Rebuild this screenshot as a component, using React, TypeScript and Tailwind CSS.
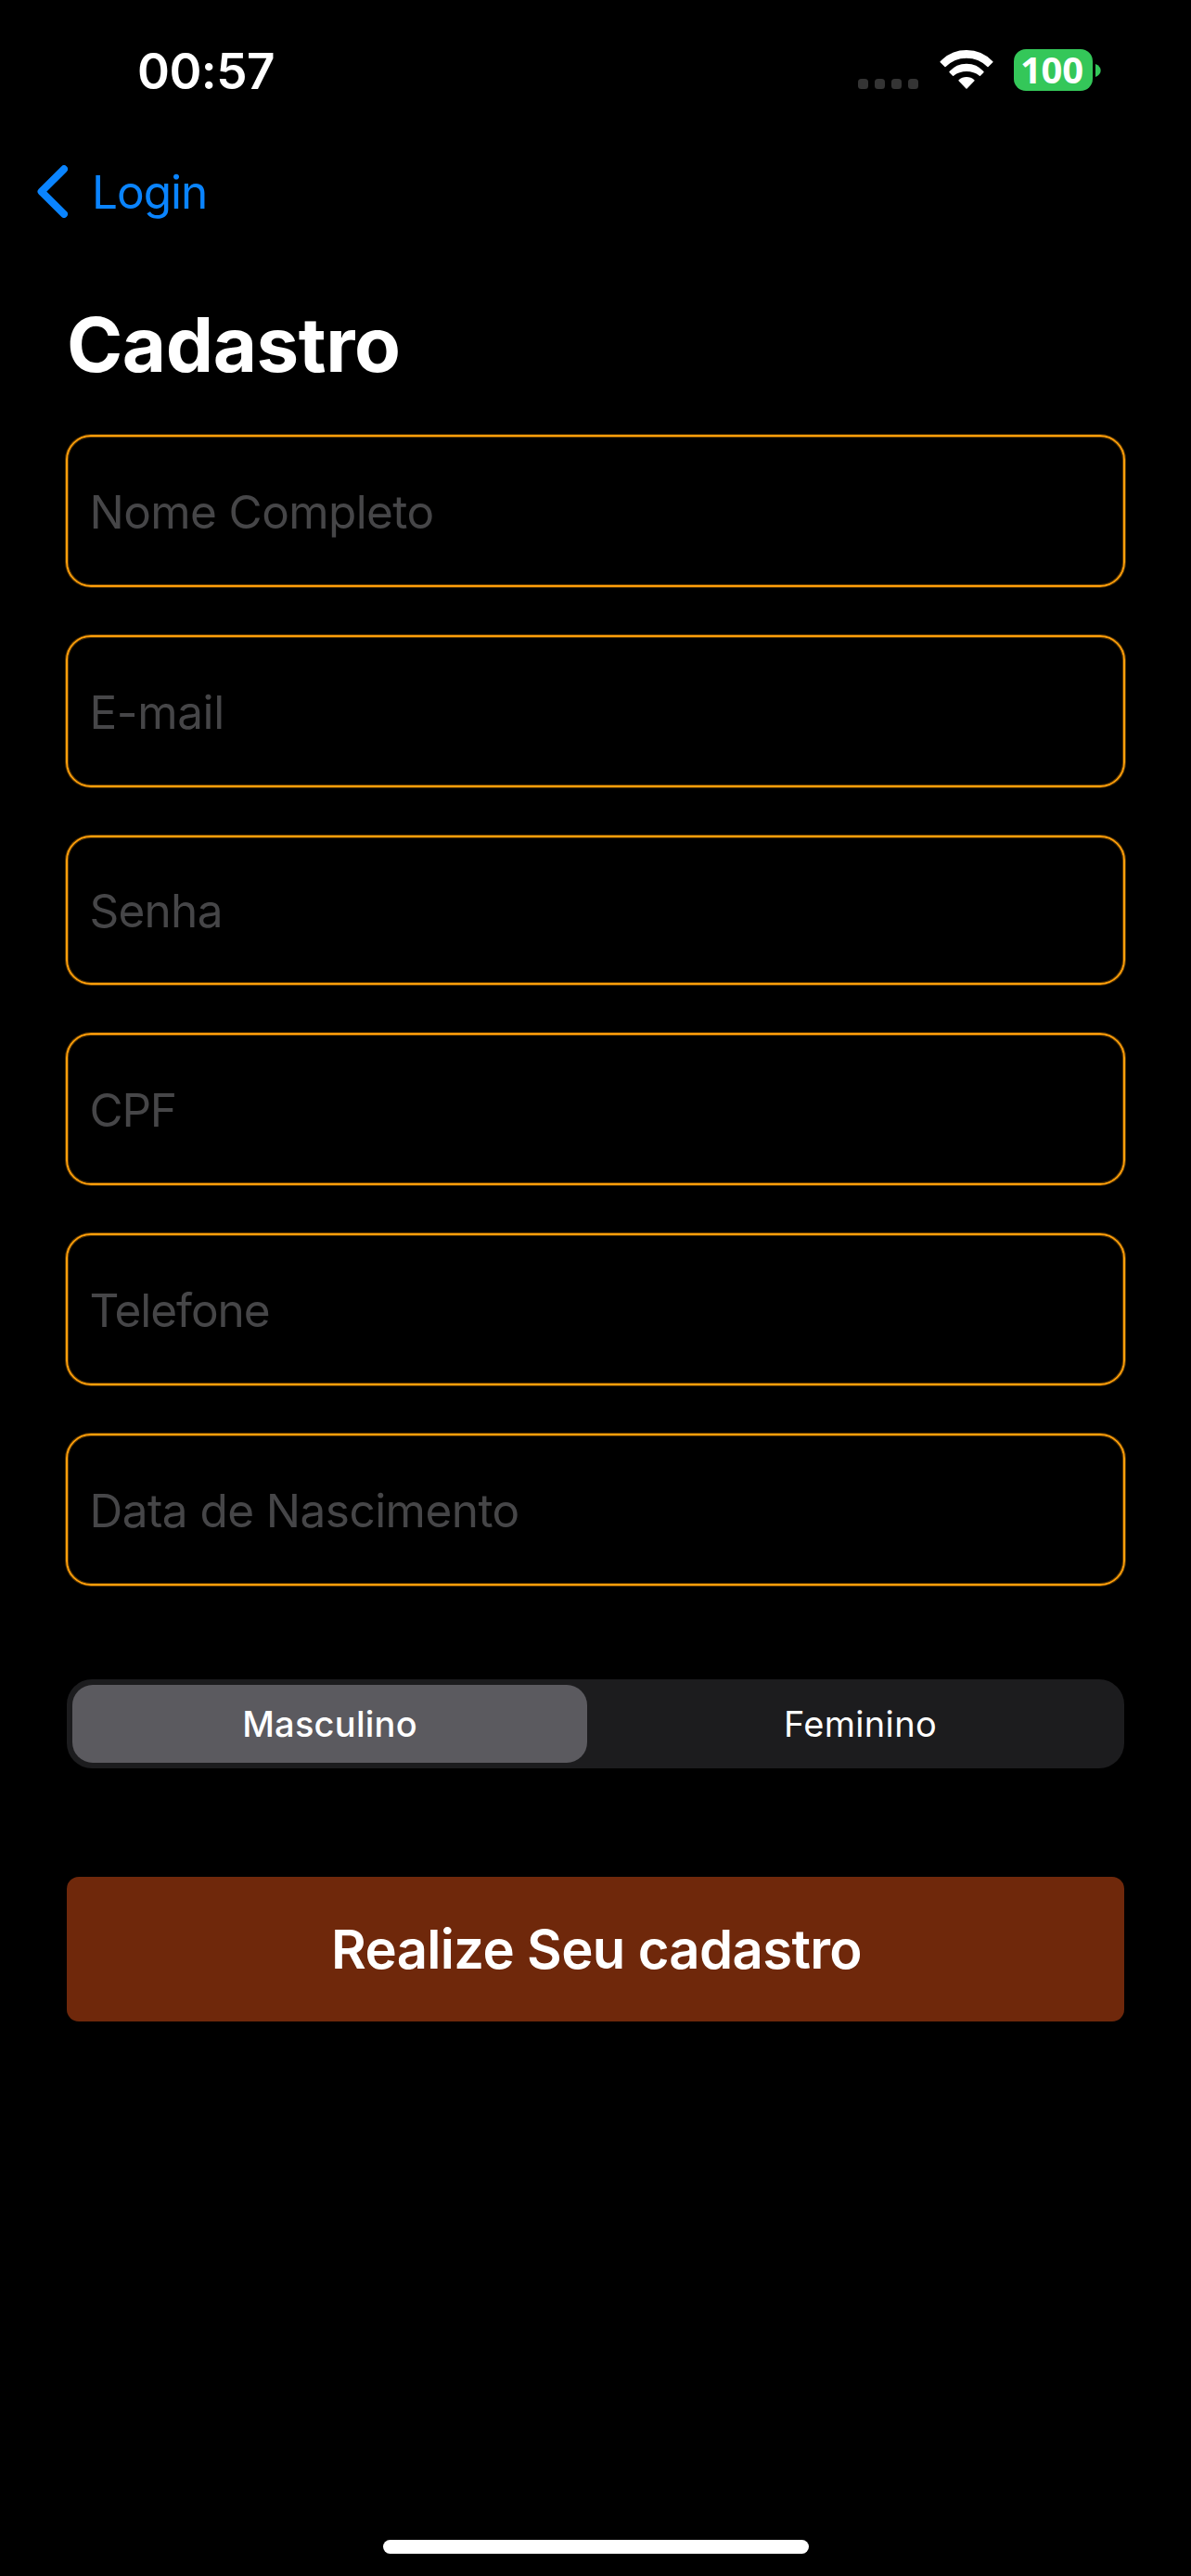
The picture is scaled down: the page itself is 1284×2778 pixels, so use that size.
import React from "react";

type FieldProps = { label: string; tracking: string; box?: string };

const fields: FieldProps[] = [
  { label: "Nome Completo", tracking: "tracking-[-0.6px]" },
  { label: "E-mail", tracking: "tracking-[-0.4px]" },
  { label: "Senha", tracking: "tracking-[-0.75px]", box: "h-[161px] pt-px" },
  { label: "CPF", tracking: "tracking-[-1.2px]" },
  { label: "Telefone", tracking: "tracking-[-1.05px]" },
  { label: "Data de Nascimento", tracking: "tracking-[-0.55px]" },
];

function WifiIcon() {
  return (
    <svg
      viewBox="0 0 58 44"
      className="mt-[53px] ml-[22.5px] h-[44px] w-[58px] shrink-0"
      fill="white"
      stroke="white"
      strokeWidth="1.5"
      strokeLinejoin="round"
    >
      <path d="M1.2 13.8A38 38 0 0 1 56.8 13.8L52 18.4A32.7 32.7 0 0 0 6 18.4Z" />
      <path d="M11.1 24.6A23.7 23.7 0 0 1 46.9 24.6L43.4 28.1A24 24 0 0 0 14.6 28.1Z" />
      <path d="M21.1 33.8A11.75 11.75 0 0 1 36.9 33.8L29 41.9Z" />
    </svg>
  );
}

function StatusBar() {
  return (
    <div className="flex h-[177px] items-start pl-[148px]">
      <div className="mt-[45px] w-[777px] text-[53px] leading-[64px] font-semibold tracking-[-0.54px]">
        00:57
      </div>
      <div className="mt-[85px] flex gap-[7px]">
        {[0, 1, 2, 3].map((i) => (
          <span key={i} className="size-[11px] rounded-[3.5px] bg-[#343434]" />
        ))}
      </div>
      <WifiIcon />
      <div className="mt-[53px] ml-[22.5px] flex h-[45px] w-[85px] shrink-0 rounded-[13px] bg-[#34c759] pl-[7px] font-['Noto_Sans','Open_Sans',sans-serif] text-[40px] leading-[43px] font-bold tracking-[-0.3px]">
        100
      </div>
      <svg viewBox="0 0 6 14" className="mt-[69px] ml-[3px] h-[14px] w-[6px] shrink-0" fill="#34c759">
        <path d="M0 0C3.6 1.4 5.7 4 5.7 7S3.6 12.6 0 14Z" />
      </svg>
    </div>
  );
}

function Field({ label, tracking, box = "h-[164px] pt-[2px]" }: FieldProps) {
  return (
    <div
      className={`-mx-px flex items-center rounded-[27px] border-2 border-[#ff9f0a] pl-[23.5px] text-[49.5px] leading-[60px] text-[#464648] shadow-[0_0_0_1px_rgba(255,159,10,0.35),inset_0_0_0_1px_rgba(255,159,10,0.35)] ${box} ${tracking}`}
    >
      {label}
    </div>
  );
}

export default function App() {
  return (
    <div className="flex h-[2778px] w-[1284px] flex-col overflow-hidden bg-black font-['Inter',sans-serif] text-white">
      <StatusBar />

      <nav className="flex h-[60px] items-start pl-[40px] text-[#0a84ff]">
        <svg
          viewBox="0 0 33 57"
          className="mt-px h-[57px] w-[33px]"
          fill="none"
          stroke="#0a84ff"
          strokeWidth="8"
          strokeLinecap="round"
          strokeLinejoin="round"
        >
          <path d="M29 4.3L4.6 28.6L29 52.9" />
        </svg>
        <span className="ml-[26px] text-[49.5px] leading-[60px] tracking-[-1px]">Login</span>
      </nav>

      <main className="flex flex-col px-[72px] pt-[85px]">
        <h1 className="text-[81.5px] leading-[100px] font-bold tracking-[-0.43px]">Cadastro</h1>

        <div className="mt-[47px] flex flex-col gap-[52px]">
          {fields.map((f) => (
            <Field key={f.label} {...f} />
          ))}
        </div>

        <div className="mt-[101px] flex h-[96px] gap-[16px] rounded-[27px] bg-[#1c1c1e] p-[6px] text-[38px]">
          <div className="flex w-[555px] items-center justify-center rounded-[22px] bg-[#5b5a5f] font-medium tracking-[0.25px]">
            Masculino
          </div>
          <div className="flex flex-1 items-center justify-center tracking-[0.33px]">Feminino</div>
        </div>

        <button className="mt-[117px] flex h-[156px] items-center justify-center rounded-[13px] bg-[#6f280b] pl-[2px] text-[58px] font-semibold tracking-[-0.65px]">
          Realize Seu cadastro
        </button>
      </main>

      <div className="mx-auto mt-auto mb-[24px] h-[15px] w-[459px] rounded-full bg-white" />
    </div>
  );
}
